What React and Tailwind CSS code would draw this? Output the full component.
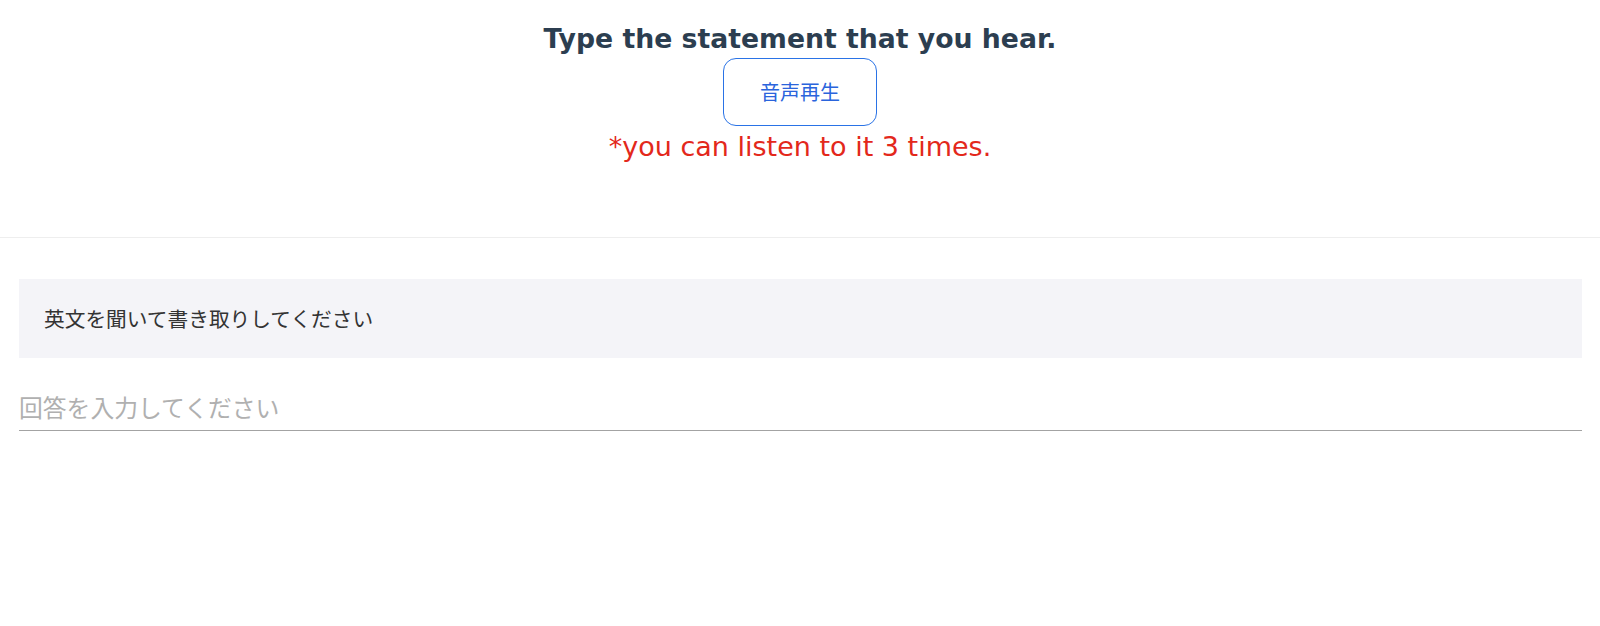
import React, { useState } from 'react';

const JP = '"Noto Sans CJK JP", "DejaVu Sans", sans-serif';

export default function App() {
    const [answer, setAnswer] = useState('');
    const [plays, setPlays] = useState(3);

    return (
        <div className="min-h-screen bg-white">
            {/* Question header */}
            <div className="flex flex-col items-center pt-6 pb-[69px] border-b border-[#eeeeee]">
                <h1 className="text-[26.7px] leading-[30px] font-bold text-[#2c3e50] font-['DejaVu_Sans',sans-serif]">
                    Type the statement that you hear.
                </h1>
                <button
                    type="button"
                    onClick={() => setPlays(p => Math.max(0, p - 1))}
                    className="mt-1 h-[68px] w-[154px] rounded-[13px] border border-[#2a73e6] bg-white text-[20px] text-[#2a64dc]"
                    style={{ fontFamily: JP }}
                >
                    音声再生
                </button>
                <p className="text-[27px] leading-[42px] text-[#e3281b] font-['DejaVu_Sans',sans-serif]">
                    *you can listen to it {plays} times.
                </p>
            </div>

            {/* Answer area */}
            <div className="pl-[19px] pr-[18px] pt-[41px]">
                <div
                    className="flex h-[79px] items-center bg-[#f4f4f8] pl-[25px] text-[20.7px] text-[#333333]"
                    style={{ fontFamily: JP }}
                >
                    英文を聞いて書き取りしてください
                </div>
                <input
                    type="text"
                    value={answer}
                    onChange={e => setAnswer(e.target.value)}
                    placeholder="回答を入力してください"
                    className="mt-6 block h-[49px] w-full border-b border-[#a3a3a3] bg-transparent text-[23.8px] text-[#333333] outline-none placeholder:text-[#b0b0b0]"
                    style={{ fontFamily: JP }}
                />
            </div>
        </div>
    );
}
